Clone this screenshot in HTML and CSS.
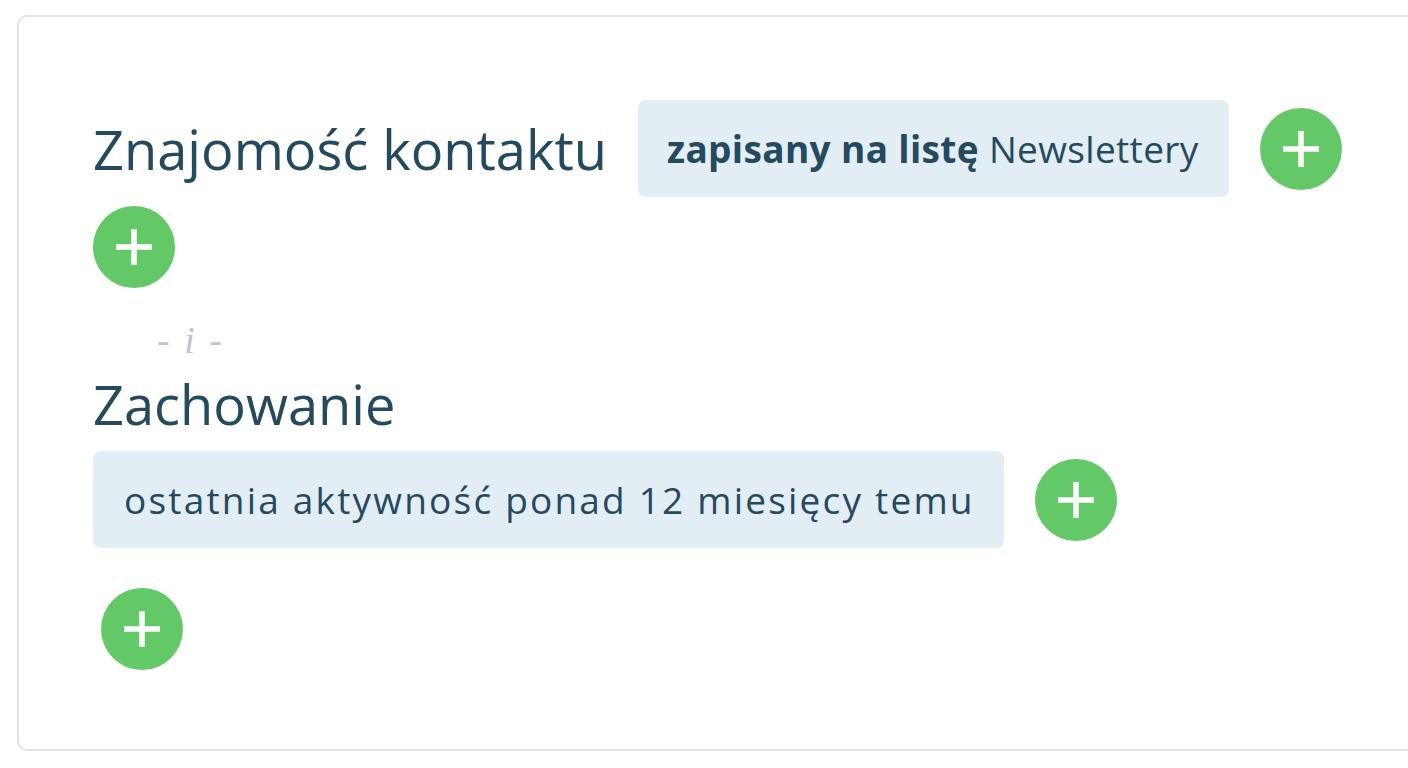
FILE: index.html
```html
<!DOCTYPE html>
<html lang="pl">
<head>
<meta charset="utf-8">
<link rel="stylesheet" href="styles.css">
</head>
<body>
<div class="card">
  <div class="row">
    <h2 class="title">Znajomość kontaktu</h2>
    <div class="chip chip-1"><b>zapisany na listę</b> Newslettery</div>
    <button class="plus"><svg viewBox="0 0 82 82"><path d="M41 23v36M23 41h36"/></svg></button>
  </div>
  <div class="row-add">
    <button class="plus"><svg viewBox="0 0 82 82"><path d="M41 23v36M23 41h36"/></svg></button>
  </div>
  <div class="sep">- <i>i</i> -</div>
  <h2 class="title title-2">Zachowanie</h2>
  <div class="row">
    <div class="chip chip-2">ostatnia aktywność ponad 12 miesięcy temu</div>
    <button class="plus"><svg viewBox="0 0 82 82"><path d="M41 23v36M23 41h36"/></svg></button>
  </div>
  <div class="row-add indent">
    <button class="plus"><svg viewBox="0 0 82 82"><path d="M41 23v36M23 41h36"/></svg></button>
  </div>
</div>
</body>
</html>
```
FILE: styles.css
```css
html, body {
  margin: 0;
  padding: 0;
  background: #ffffff;
}
body {
  font-family: "Open Sans", "Noto Sans", sans-serif;
  color: #234a5f;
  padding: 15px 0 0 17px;
}
.card {
  box-sizing: border-box;
  width: 1440px;
  height: 736px;
  border: 2px solid #e3e3e3;
  border-radius: 10px;
  padding: 83px 0 0 74px;
}
.row {
  display: flex;
  align-items: center;
  gap: 31px;
}
.title {
  margin: 0;
  font-size: 54.2px;
  font-weight: 400;
  line-height: 64px;
  color: #234a5f;
}
.chip {
  background: #e3edf4;
  border-radius: 8px;
  height: 97px;
  display: flex;
  align-items: center;
  padding: 0 30px 0 30px;
  font-size: 37px;
  color: #234a5f;
  white-space: pre;
}
.chip-1 { letter-spacing: 0.35px; padding: 0 30px 0 29px; }
.chip-2 { letter-spacing: 2.2px; padding: 0 29px 0 31px; }
.chip b { font-weight: 700; }
.plus {
  width: 82px;
  height: 82px;
  border-radius: 50%;
  border: none;
  background: #62c966;
  padding: 0;
  display: flex;
  align-items: center;
  justify-content: center;
  flex: none;
}
.plus svg {
  width: 82px;
  height: 82px;
}
.plus path {
  stroke: #ffffff;
  stroke-width: 5.5;
  fill: none;
}
.row-add {
  margin-top: 9px;
  display: flex;
}
.row-add.indent {
  margin-top: 40px;
  padding-left: 8px;
}
.sep {
  margin: 30px 0 0 64px;
  font-family: "Liberation Serif", serif;
  font-size: 38px;
  word-spacing: 5px;
  color: #c4c4c4;
  line-height: 44px;
}
.title-2 {
  margin-top: 10px;
  margin-bottom: 15px;
}
```
